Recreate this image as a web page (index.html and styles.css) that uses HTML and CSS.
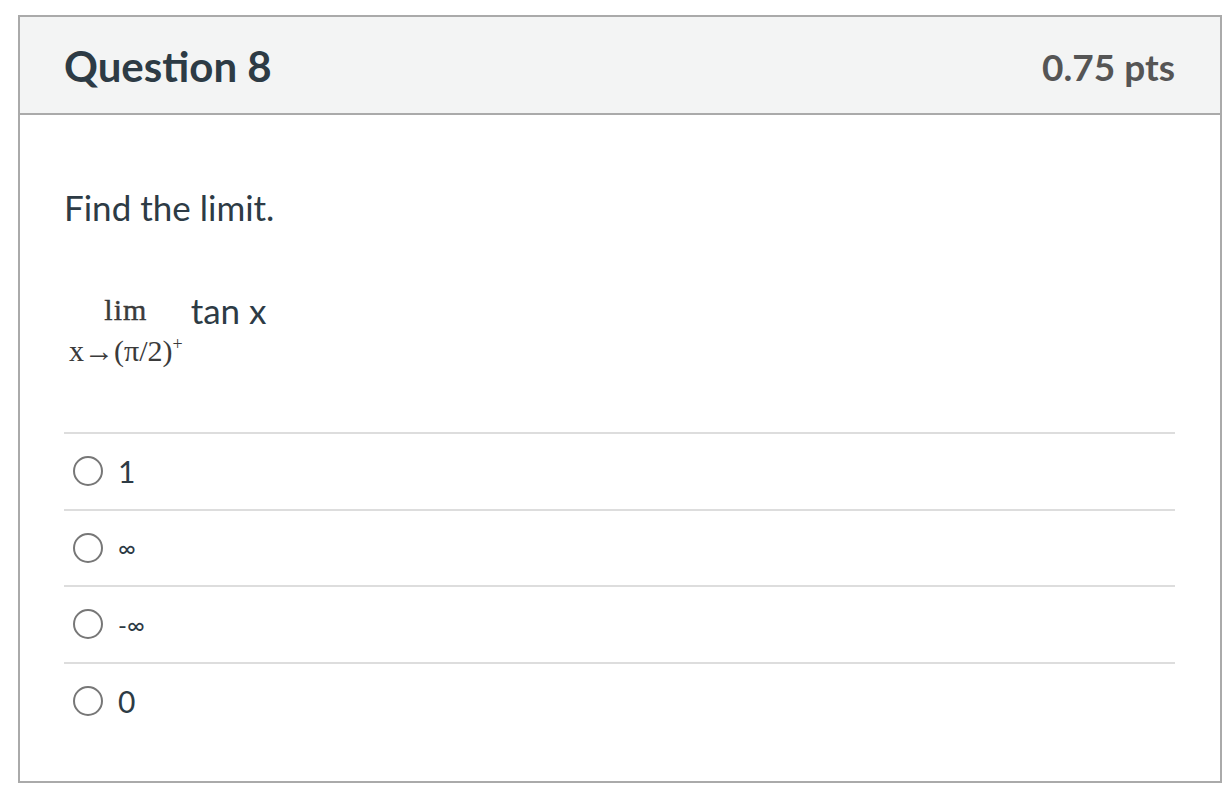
FILE: index.html
```html
<!DOCTYPE html>
<html>
<head>
<meta charset="utf-8">
<link rel="stylesheet" href="styles.css">
</head>
<body>
<div class="card">
  <div class="header">
    <h2 class="title">Question 8</h2>
    <div class="pts">0.75 pts</div>
  </div>
  <div class="body">
    <p class="prompt">Find the limit.</p>
    <div class="expr">
      <div class="lim">
        <span class="lim-word">lim</span>
        <span class="lim-sub">x→(π/2)<sup>+</sup></span>
      </div>
      <span class="fn">tan x</span>
    </div>
    <ul class="answers">
      <li class="answer"><span class="radio"></span><span class="label">1</span></li>
      <li class="answer"><span class="radio"></span><span class="label sm">∞</span></li>
      <li class="answer"><span class="radio"></span><span class="label sm">-∞</span></li>
      <li class="answer"><span class="radio"></span><span class="label">0</span></li>
    </ul>
  </div>
</div>
</body>
</html>
```
FILE: styles.css
```css
html, body {
  margin: 0;
  padding: 0;
  background: #fff;
}
body {
  font-family: Lato, "Liberation Sans", sans-serif;
  color: #2d3b45;
  padding: 15px 0 0 18px;
}
.card {
  width: 1200px;
  border: 2px solid #aaaaaa;
  box-sizing: content-box;
}
.header {
  height: 98px;
  background: #f3f4f4;
  border-bottom: 2px solid #aaaaaa;
  display: flex;
  align-items: center;
  justify-content: space-between;
  padding: 0 45px 0 44px;
  box-sizing: border-box;
}
.title {
  margin: 0;
  font-size: 42px;
  font-weight: 700;
  color: #2d3b45;
  position: relative;
  top: 1px;
}
.pts {
  font-size: 37px;
  font-weight: 700;
  color: #555;
  position: relative;
  top: 1px;
}
.body {
  padding: 72px 45px 43px 44px;
}
.prompt {
  margin: 0;
  font-size: 35px;
  line-height: 40px;
}
.expr {
  display: flex;
  align-items: flex-start;
  margin-top: 65px;
  margin-left: 5px;
}
.lim {
  display: flex;
  flex-direction: column;
  align-items: center;
  font-family: "Liberation Serif", serif;
  color: #3a3a3a;
}
.lim-word {
  font-size: 30px;
  line-height: 32px;
  margin-top: 2px;
  letter-spacing: 1px;
  -webkit-text-stroke: 0.4px #3a3a3a;
}
.lim-sub {
  font-size: 30px;
  line-height: 30px;
  margin-top: 3px;
  letter-spacing: 0;
}
.lim-sub sup {
  font-size: 18px;
}
.fn {
  font-size: 35px;
  line-height: 36px;
  margin-left: 8px;
  margin-top: 0;
}
.answers {
  list-style: none;
  margin: 66px 0 0 0;
  padding: 0;
}
.answer {
  display: flex;
  align-items: center;
  height: 74.5px;
  border-top: 2px solid #dddddd;
  padding-left: 9px;
}
.radio {
  width: 26px;
  height: 26px;
  border: 2px solid #777;
  border-radius: 50%;
  flex: none;
}
.label {
  font-size: 30px;
  margin-left: 15px;
  color: #2d3b45;
}
.label.sm {
  font-size: 24px;
}
```
